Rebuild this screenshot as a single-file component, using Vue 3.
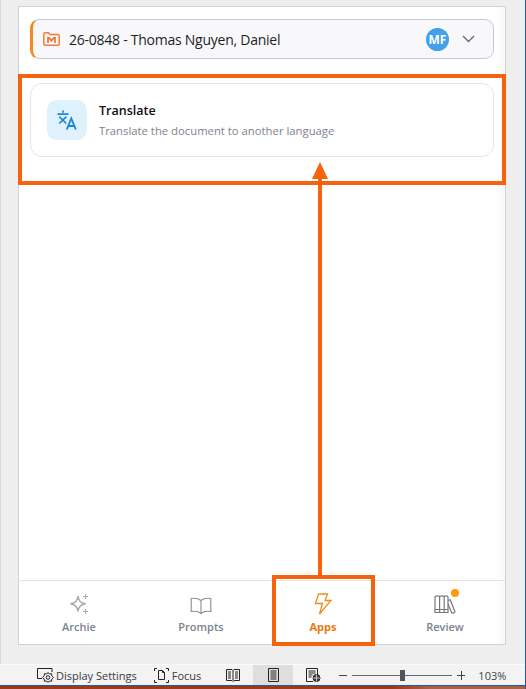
<template>
  <div class="window">
    <div class="main">
      <div class="pane">
        <div class="matter">
          <svg class="folder" width="17" height="14" viewBox="0 0 17 14" fill="none">
            <path d="M.8 2.300C.8 1.400 1.400.8 2.300.8h3.200l1.700 1.800h7.500c.9 0 1.500.6 1.500 1.500v7.600c0 .9-.6 1.500-1.500 1.500H2.300c-.9 0-1.500-.6-1.500-1.500z" stroke="#f47b3a" stroke-width="1.500" />
            <path d="M5 11V5.800h1l2.500 2.900L11 5.800h1V11" stroke="#f26a21" stroke-width="1.600" />
          </svg>
          <span class="matter-name">26-0848 - Thomas Nguyen, Daniel</span>
          <span class="avatar">MF</span>
          <svg class="chevron" width="13" height="8" viewBox="0 0 13 8" fill="none">
            <path d="M1 1l5.500 5.500L12 1" stroke="#6b6b70" stroke-width="1.400" />
          </svg>
        </div>

        <div class="app-card">
          <div class="app-icon">
            <svg width="20" height="20" viewBox="0 0 20 20" fill="none" stroke="#1c86d1" stroke-width="1.700">
              <path d="M.5 4.200h11M6 .5v2.200M2.300 6.700l7 6.800M9.300 6.700l-7 6.800" />
              <path d="M9.800 19.500L14.300 8.500l4.500 11M11.300 16h6" stroke-width="1.900" />
            </svg>
          </div>
          <div class="app-text">
            <div class="app-title">Translate</div>
            <div class="app-desc">Translate the document to another language</div>
          </div>
        </div>

        <div class="spacer"></div>

        <nav class="tabs">
          <div class="tab">
            <svg width="24" height="22" viewBox="0 0 24 22" fill="none" stroke="#a9a9ad" stroke-width="1.500">
              <path d="M11 3c.7 5 2.300 6.800 7.500 7.800-5.200 1-6.800 2.700-7.500 7.700-.7-5-2.300-6.700-7.500-7.700C8.700 9.800 10.300 8 11 3z" />
              <path d="M18.500 1v5M16 3.500h5M18.500 16v5M16 18.500h5" stroke-width="1" />
            </svg>
            <span>Archie</span>
          </div>
          <div class="tab">
            <svg width="22" height="18" viewBox="0 0 22 18" fill="none" stroke="#8d8d92" stroke-width="1.100">
              <path d="M11 3.500C9 1.800 5 1 1.200 1.500v13c3.800-.5 7.800.2 9.800 2 2-1.800 6-2.500 9.800-2v-13C17 1 13 1.800 11 3.500zM11 3.500v13" />
            </svg>
            <span>Prompts</span>
          </div>
          <div class="tab active">
            <svg width="18" height="22" viewBox="0 0 18 22" fill="none" stroke="#f08c1e" stroke-width="1.300">
              <path d="M4.500 1h9l-2.500 6.500h6L5.500 21l3-10.500H1.500z" />
            </svg>
            <span>Apps</span>
          </div>
          <div class="tab review">
            <i class="dot"></i>
            <svg width="22" height="22" viewBox="0 0 22 22" fill="none" stroke="#77777c" stroke-width="1.200">
              <path d="M1 19.500V4c0-1.500 4.600-1.500 4.600 0v15.500zM5.600 19.500V4c0-1.500 4.600-1.500 4.600 0v15.500zM10.200 19.500V4c0-1.500 3.800-1.500 3.800 0v15.500z" />
              <path d="M1 16.500h13M14 7.500l2.200-.8 4.700 11.800c.3 1-2.700 2.300-3.200 1.200L14 11" />
            </svg>
            <span>Review</span>
          </div>
        </nav>
      </div>
    </div>

    <footer class="status">
      <div class="status-item settings">
        <svg width="18" height="16" viewBox="0 0 18 16" fill="none" stroke="#222" stroke-width="1">
          <path d="M5 11.500H.5V1.500h14.500v3.500" />
          <path d="M11 5.500l1.300 1.500 2.200-.3.300 2.200 1.700 1.600-1.700 1.600-.3 2.200-2.200-.3L11 15.500 9.700 14l-2.200.3-.3-2.200-1.700-1.600 1.700-1.600.3-2.200 2.200.3z" />
          <circle cx="11" cy="10.500" r="1.800" />
        </svg>
        <span>Display Settings</span>
      </div>
      <div class="status-item focus">
        <svg width="15" height="15" viewBox="0 0 15 15" fill="none" stroke="#222" stroke-width="1">
          <path d="M3 .5H.5V3M.5 12v2.500H3M12 .5h2.500V3M14.500 12v2.500H12" />
          <path d="M4.500 11.500v-9h4l2 2v7zM8.500 2.500v2h2" />
        </svg>
        <span>Focus</span>
      </div>
      <div class="view">
        <svg width="14" height="13" viewBox="0 0 14 13" fill="none" stroke="#222" stroke-width="1">
          <path d="M.5.500h5.500l1 1 1-1h5.500v11H8l-1 1-1-1H.5zM7 1.500v10M2 3h3M2 5h3M2 7h3M2 9h3M9 3h3M9 5h3M9 7h3M9 9h3" />
        </svg>
      </div>
      <div class="view current">
        <svg width="11" height="14" viewBox="0 0 11 14" fill="none" stroke="#222" stroke-width="1">
          <path d="M.5.500h10v13H.5zM2.500 3h6M2.500 5h6M2.500 7h6M2.500 9h6M2.500 11h6" />
        </svg>
      </div>
      <div class="view">
        <svg width="15" height="14" viewBox="0 0 15 14" fill="none" stroke="#222" stroke-width="1">
          <path d="M7 13.500H.5V.500h11V7M2.500 3h7M2.500 5h7M2.500 7h4M2.500 9h3" />
          <circle cx="10.500" cy="10" r="3.500" fill="#444" />
          <path d="M7 10h7M10.500 6.500v7" stroke="#eee" stroke-width=".7" />
        </svg>
      </div>
      <div class="zoom">
        <span class="zoom-sign minus"></span>
        <div class="slider"><i class="thumb"></i></div>
        <span class="zoom-sign plus"></span>
        <span class="percent">103%</span>
      </div>
    </footer>
    <div class="desktop"></div>

    <!-- annotation drawn over the screenshot -->
    <div class="mark mark-top"></div>
    <div class="mark mark-apps"></div>
    <div class="arrow-line"></div>
    <div class="arrow-head"></div>
  </div>
</template>

<script setup>
</script>

<style>
html, body { margin: 0; background: #eeeeee; }
</style>

<style scoped>
.window {
  position: relative;
  width: 526px;
  height: 689px;
  box-sizing: border-box;
  display: flex;
  flex-direction: column;
  overflow: hidden;
  background: #eeeeee;
  border-right: 1px solid #2a55a4;
  font-family: "Open Sans", "Noto Sans", sans-serif;
}

.main {
  height: 664px;
  padding: 6px 19px 19px 17px;
  box-sizing: border-box;
  border-left: 1px solid #d9d9d9;
}

.pane {
  height: 100%;
  box-sizing: border-box;
  background: linear-gradient(to left, #f8f8f8, #fff 10px);
  border: 1px solid #d2d2d6;
  display: flex;
  flex-direction: column;
}

.matter {
  margin: 12px 11px 0;
  height: 40px;
  box-sizing: border-box;
  display: flex;
  align-items: center;
  background: #f8f8fb;
  border: 1px solid #c3c9dc;
  border-left: 3px solid #f58a1f;
  border-radius: 9px;
  padding-left: 10px;
  color: #1c1f26;
}

.folder { flex: none; }

.matter-name {
  margin-left: 9px;
  font-size: 14px;
  letter-spacing: -0.25px;
  flex: 1;
}

.avatar {
  width: 23px;
  height: 23px;
  border-radius: 50%;
  background: #42a0ec;
  color: #fff;
  font-size: 12px;
  font-weight: 700;
  display: flex;
  align-items: center;
  justify-content: center;
}

.chevron { margin: 0 18px 0 13px; }

.app-card {
  margin: 24px 11px 0;
  height: 74px;
  box-sizing: border-box;
  display: flex;
  align-items: center;
  gap: 12px;
  padding-left: 16px;
  border: 1px solid #e4e5ea;
  border-radius: 12px;
}

.app-icon {
  width: 40px;
  height: 40px;
  border-radius: 10px;
  background: #e0f1fe;
  display: flex;
  align-items: center;
  justify-content: center;
}

.app-title {
  font-size: 12.500px;
  font-weight: 600;
  color: #0e1015;
  line-height: 18px;
}

.app-desc {
  margin-top: 3px;
  font-size: 11.300px;
  color: #7e838e;
  line-height: 16px;
}

.spacer { flex: 1; }

.tabs {
  height: 63px;
  flex: none;
  display: grid;
  grid-template-columns: 120px 124px 120px 1fr;
  border-top: 1px solid #e4e4e6;
}

.tab {
  position: relative;
  display: flex;
  flex-direction: column;
  align-items: center;
  justify-content: flex-end;
  padding-bottom: 10px;
  gap: 4px;
  font-size: 11px;
  font-weight: 600;
  color: #7d828c;
}

.tab svg { display: block; }

.tab.active {
  color: #e8780f;
  font-weight: 700;
}

.tab.review { padding-left: 2px; }

.dot {
  position: absolute;
  top: 8px;
  left: 68px;
  width: 8px;
  height: 8px;
  border-radius: 50%;
  background: #ff9a0a;
}

.status {
  height: 21px;
  flex: none;
  display: flex;
  align-items: center;
  background: #f3f3f3;
  border-top: 1px solid #fafafa;
  box-sizing: border-box;
  font-size: 11px;
  color: #3a3a3a;
}

.status-item {
  display: flex;
  align-items: center;
  gap: 1px;
}

.settings { margin-left: 37px; }
.focus { margin-left: 17px; gap: 3px; }

.view {
  width: 40px;
  height: 100%;
  display: flex;
  align-items: center;
  justify-content: center;
}

.status-item + .view { margin-left: 12px; }
.view.current { background: #dedede; }

.zoom {
  margin-left: 6px;
  display: flex;
  align-items: center;
  flex: 1;
}

.zoom-sign {
  position: relative;
  width: 8px;
  height: 1px;
  background: #444;
}

.plus::after {
  content: "";
  position: absolute;
  left: 3.500px;
  top: -4px;
  width: 1px;
  height: 9px;
  background: #444;
}

.slider {
  position: relative;
  width: 100px;
  height: 1px;
  margin: 0 5px 0 5px;
  background: #666;
}

.thumb {
  position: absolute;
  left: 48px;
  top: -5px;
  width: 5px;
  height: 11px;
  background: #555;
}

.percent {
  margin-left: 13px;
  font-size: 11px;
  color: #444;
}

.desktop {
  flex: 1;
  border-top: 1px solid #2a55a4;
  background: linear-gradient(to right, #9a3a1c 75%, #a8604a 82%);
}

.mark {
  position: absolute;
  box-sizing: border-box;
  border: 4px solid #f7630c;
}

.mark-top {
  left: 18px;
  top: 74px;
  width: 488px;
  height: 111px;
}

.mark-apps {
  left: 272px;
  top: 575px;
  width: 103px;
  height: 71px;
}

.arrow-line {
  position: absolute;
  left: 318px;
  top: 176px;
  width: 4px;
  height: 400px;
  background: #f7630c;
}

.arrow-head {
  position: absolute;
  left: 312px;
  top: 162px;
  border-left: 8px solid transparent;
  border-right: 8px solid transparent;
  border-bottom: 17px solid #f7630c;
}
</style>
